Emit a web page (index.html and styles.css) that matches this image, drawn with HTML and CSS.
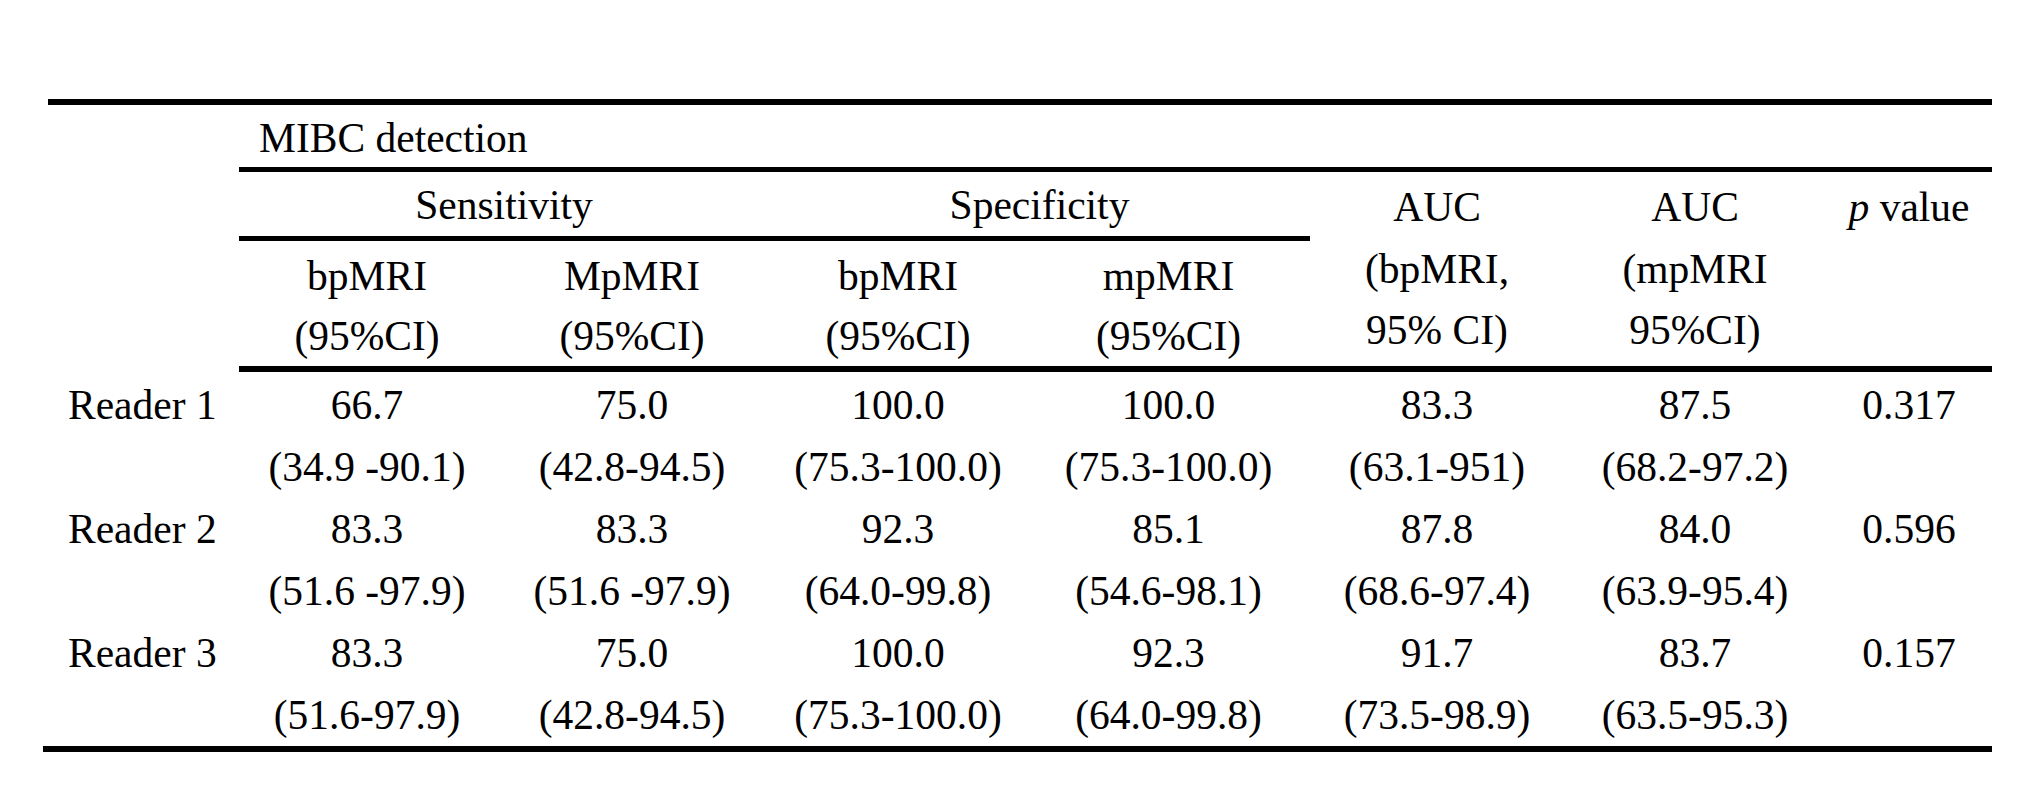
FILE: index.html
```html
<!DOCTYPE html>
<html lang="en">
<head>
<meta charset="utf-8">
<title>MIBC detection</title>
<link rel="stylesheet" href="styles.css">
</head>
<body>
<div class="sheet">
  <table class="results">
    <colgroup>
      <col class="c-label">
      <col class="c-1">
      <col class="c-2">
      <col class="c-3">
      <col class="c-4">
      <col class="c-5">
      <col class="c-6">
      <col class="c-7">
    </colgroup>
    <thead>
      <tr>
        <th class="corner" rowspan="3"></th>
        <th class="group" colspan="7">MIBC detection</th>
      </tr>
      <tr>
        <th class="metric" colspan="2">Sensitivity</th>
        <th class="metric" colspan="2">Specificity</th>
        <th class="auc" rowspan="2">AUC<br>(bpMRI,<br>95% CI)</th>
        <th class="auc" rowspan="2">AUC<br>(mpMRI<br>95%CI)</th>
        <th class="auc" rowspan="2"><i>p</i> value</th>
      </tr>
      <tr>
        <th class="sub">bpMRI<br>(95%CI)</th>
        <th class="sub">MpMRI<br>(95%CI)</th>
        <th class="sub">bpMRI<br>(95%CI)</th>
        <th class="sub">mpMRI<br>(95%CI)</th>
      </tr>
    </thead>
    <tbody>
      <tr class="first">
        <td class="label">Reader 1</td>
        <td>66.7<br>(34.9 -90.1)</td>
        <td>75.0<br>(42.8-94.5)</td>
        <td>100.0<br>(75.3-100.0)</td>
        <td>100.0<br>(75.3-100.0)</td>
        <td>83.3<br>(63.1-951)</td>
        <td>87.5<br>(68.2-97.2)</td>
        <td>0.317</td>
      </tr>
      <tr>
        <td class="label">Reader 2</td>
        <td>83.3<br>(51.6 -97.9)</td>
        <td>83.3<br>(51.6 -97.9)</td>
        <td>92.3<br>(64.0-99.8)</td>
        <td>85.1<br>(54.6-98.1)</td>
        <td>87.8<br>(68.6-97.4)</td>
        <td>84.0<br>(63.9-95.4)</td>
        <td>0.596</td>
      </tr>
      <tr>
        <td class="label">Reader 3</td>
        <td>83.3<br>(51.6-97.9)</td>
        <td>75.0<br>(42.8-94.5)</td>
        <td>100.0<br>(75.3-100.0)</td>
        <td>92.3<br>(64.0-99.8)</td>
        <td>91.7<br>(73.5-98.9)</td>
        <td>83.7<br>(63.5-95.3)</td>
        <td>0.157</td>
      </tr>
    </tbody>
  </table>
</div>
</body>
</html>
```

FILE: styles.css
```css
html, body {
  margin: 0;
  padding: 0;
  background: #ffffff;
}

body {
  font-family: "Liberation Serif", "Times New Roman", serif;
  color: #000000;
}

.sheet {
  margin: 99px 0 0 43px;
  width: 1949px;
  border-bottom: 6px solid #000;
}

.results {
  margin-left: 5px;
  width: 1944px;
  table-layout: fixed;
  border-collapse: separate;
  border-spacing: 0;
  border-top: 6px solid #000;
  font-size: 41.5px;
}

.c-label { width: 191px; }
.c-1 { width: 256px; }
.c-2 { width: 274px; }
.c-3 { width: 258px; }
.c-4 { width: 283px; }
.c-5 { width: 254px; }
.c-6 { width: 262px; }
.c-7 { width: 166px; }

th, td {
  padding: 0;
  font-weight: normal;
  text-align: center;
  vertical-align: top;
  white-space: nowrap;
}

.group {
  text-align: left;
  padding: 4px 0 0 20px;
  line-height: 58px;
  border-bottom: 5px solid #000;
}

.metric {
  padding-top: 2px;
  line-height: 62px;
  border-bottom: 5px solid #000;
}

.auc {
  padding-top: 5px;
  line-height: 61.5px;
  border-bottom: 6px solid #000;
}

.sub {
  padding-top: 5px;
  line-height: 60px;
  border-bottom: 6px solid #000;
}

tbody td {
  line-height: 62px;
}

tbody tr.first td {
  padding-top: 2px;
}

td.label {
  text-align: left;
  padding-left: 20px;
}
```
